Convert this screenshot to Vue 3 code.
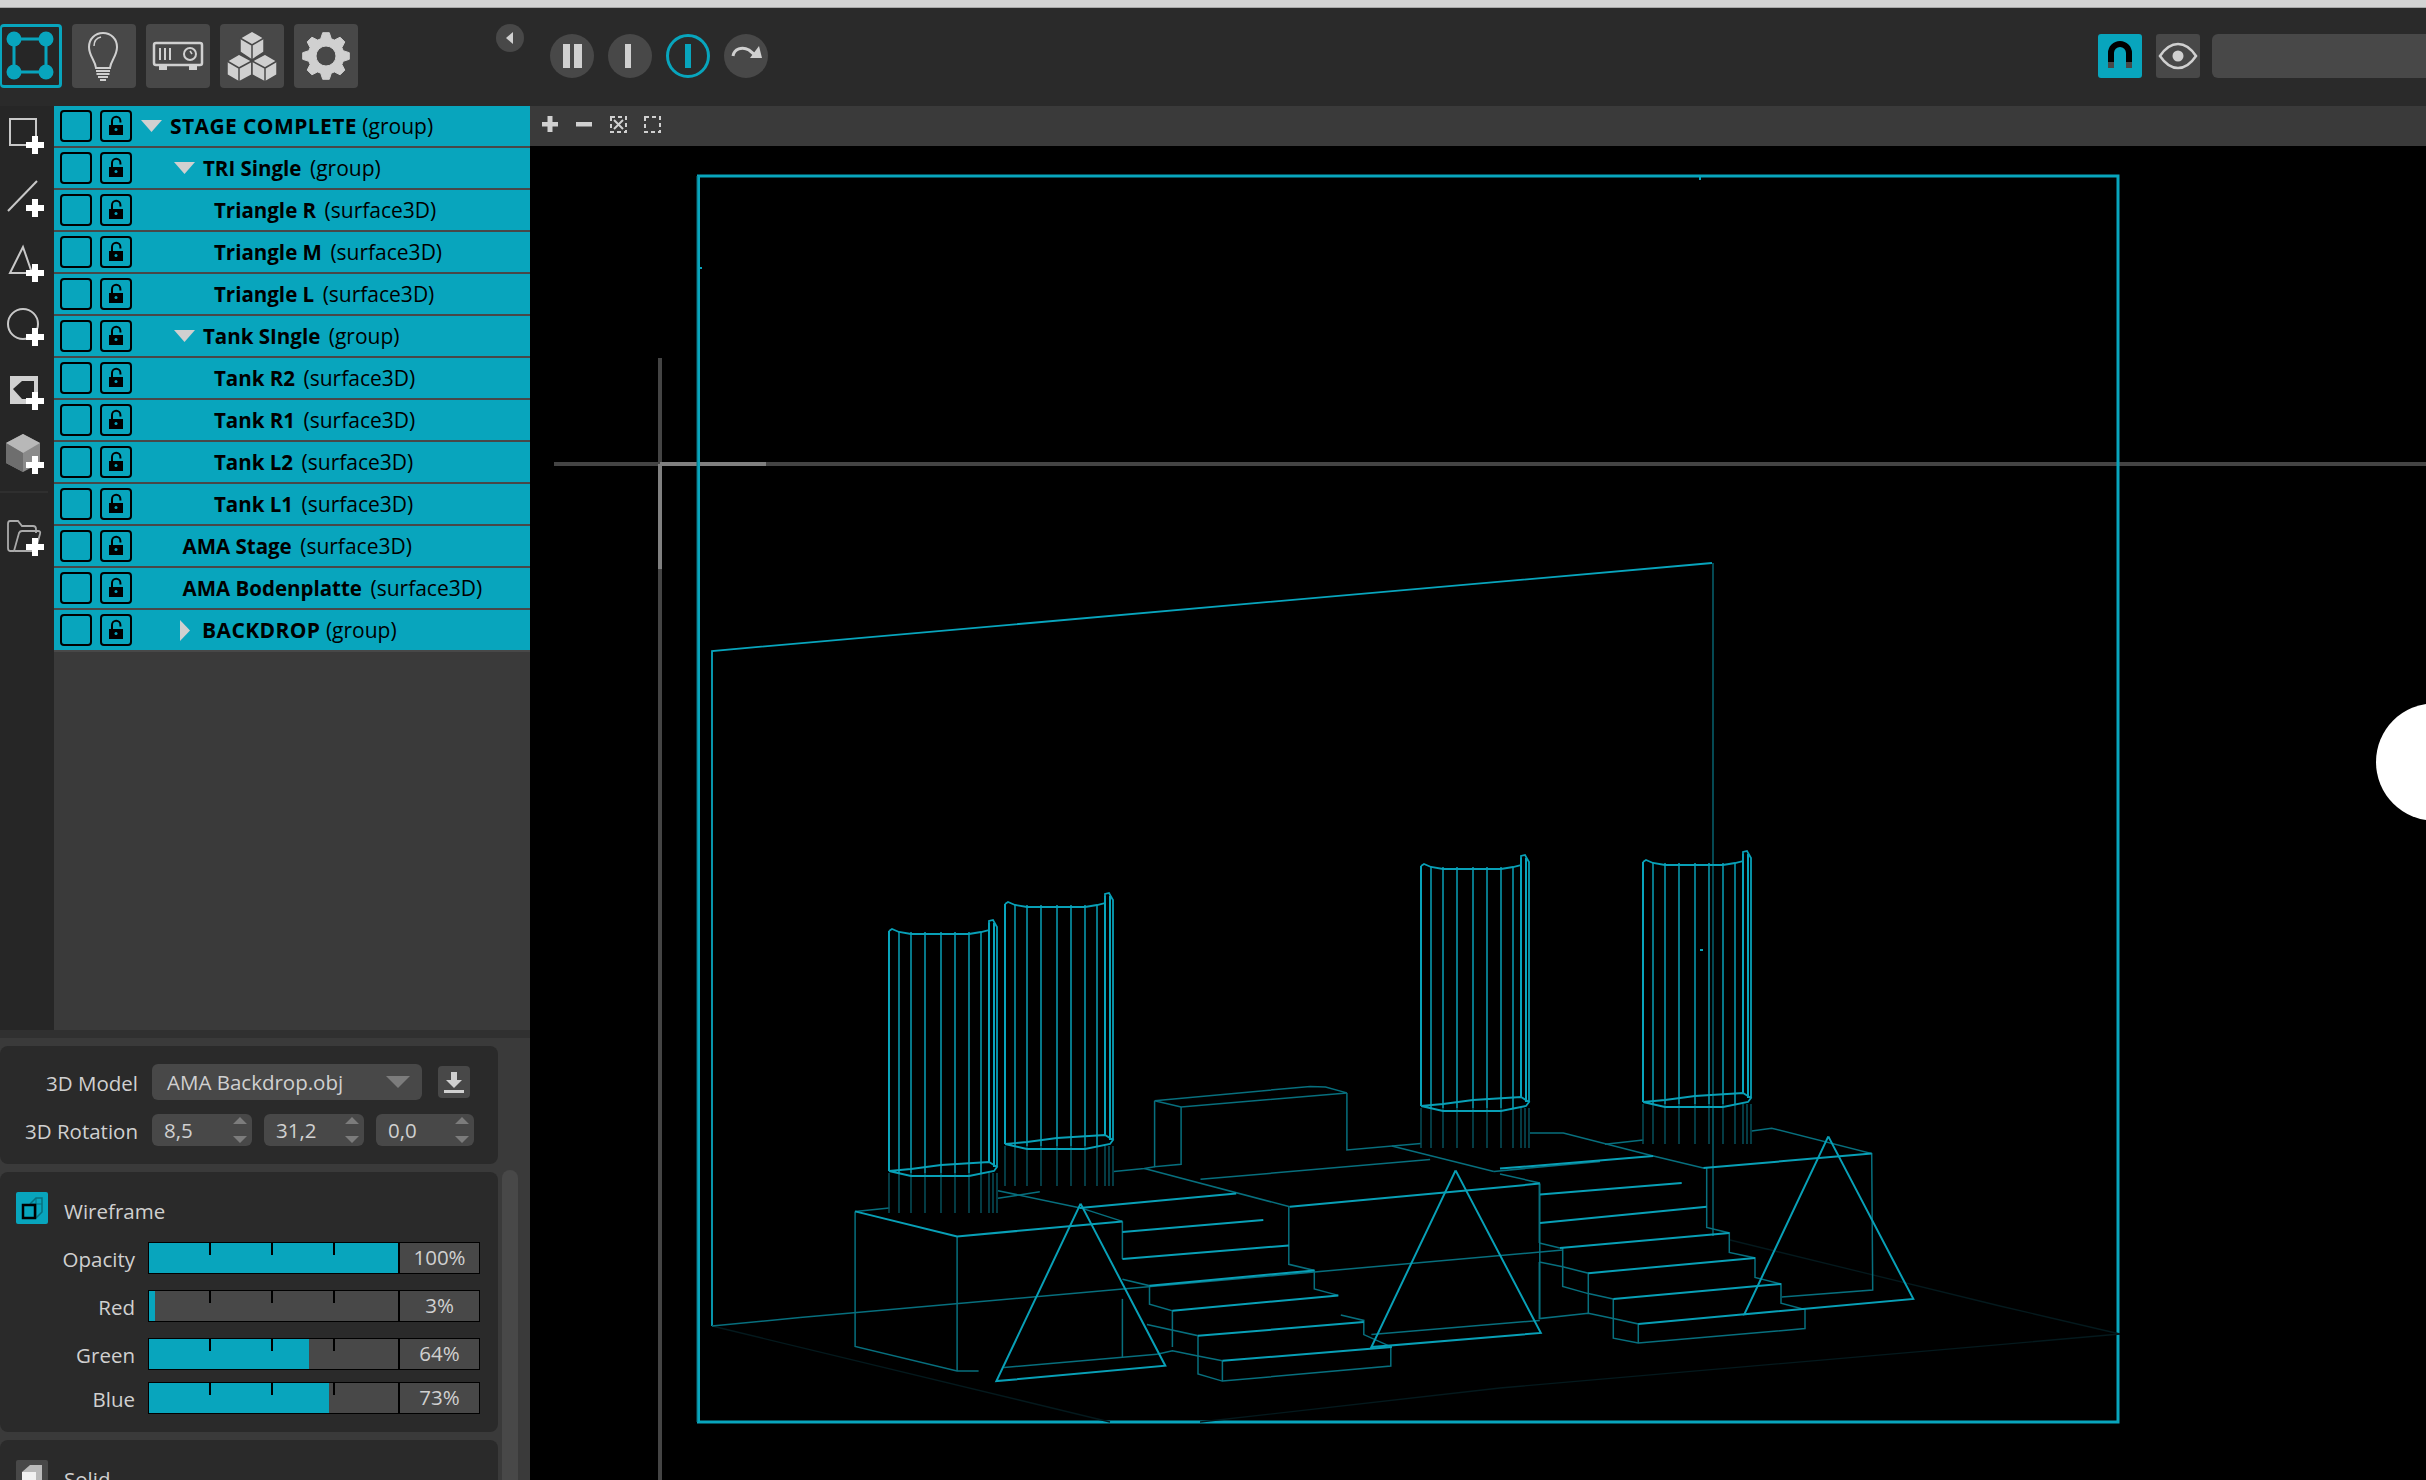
<template>
  <div class="app">
    <div class="titlebar"></div>

    <header class="toolbar">
      <button class="mode active">
        <svg width="56" height="58" viewBox="3 3 56 58">
          <path d="M14 15H46V48H14Z" fill="none" stroke="#08a5bd" stroke-width="3" />
          <circle v-for="c in nodeDots" :key="c[0] + '-' + c[1]" :cx="c[0]" :cy="c[1]" r="7.5" fill="#08a5bd" />
        </svg>
      </button>
      <button class="mode">
        <svg width="64" height="64" viewBox="0 0 64 64" fill="none" stroke="#d0d0d0" stroke-width="2">
          <path d="M24 44C23 36 17 32 17 23 17 15 23 9 31 9 39 9 45 15 45 23 45 32 39 36 38 44Z" />
          <path d="M22 22C22 17 25 14 29 13" stroke-width="1.5" />
          <path d="M24 47H38M24.500 50H37.500M26 53H36M28 56H34" />
        </svg>
      </button>
      <button class="mode">
        <svg width="64" height="64" viewBox="0 0 64 64" fill="none" stroke="#d0d0d0" stroke-width="2.500">
          <rect x="8" y="19" width="48" height="22" rx="2" />
          <path d="M14 24V36M19 24V36M24 24V36" stroke-width="2" />
          <circle cx="44" cy="30" r="6" stroke-width="2" />
          <path d="M44 27L46 30" stroke-width="1.500" />
          <path d="M13 42H21V46H13ZM43 42H51V46H43Z" fill="#d0d0d0" stroke="none" />
        </svg>
      </button>
      <button class="mode">
        <svg width="64" height="64" viewBox="0 0 64 64">
          <g fill="#d0d0d0" stroke="#484848" stroke-width="1.500" stroke-linejoin="round">
            <path d="M32 7L44 14V28L32 36 20 28V14Z" />
            <path d="M20 14L32 21 44 14M32 21V36" fill="none" />
            <path d="M19 30L32 37V51L19 58 7 51V37Z" />
            <path d="M7 37L19 44 32 37M19 44V58" fill="none" />
            <path d="M45 30L57 37V51L45 58 32 51V37Z" />
            <path d="M32 37L45 44 57 37M45 44V58" fill="none" />
          </g>
        </svg>
      </button>
      <button class="mode">
        <svg width="64" height="64" viewBox="0 0 64 64">
          <path :d="gearPath" fill="#d0d0d0" fill-rule="evenodd" stroke="#d0d0d0" stroke-width="1" stroke-linejoin="round" />
        </svg>
      </button>

      <button class="collapse">
        <svg width="8" height="12" viewBox="0 0 8 12"><path d="M7 0V12L0 6Z" fill="#d0d0d0" /></svg>
      </button>

      <div class="transport">
        <button class="round">
          <svg width="44" height="44" viewBox="0 0 44 44" fill="#d0d0d0"><path d="M13 10H20V34H13ZM24 10H32V34H24Z" /></svg>
        </button>
        <button class="round">
          <svg width="44" height="44" viewBox="0 0 44 44" fill="#d0d0d0"><path d="M17 10H23V34H17Z" /></svg>
        </button>
        <button class="round on">
          <svg width="38" height="38" viewBox="3 3 38 38" fill="#08a5bd"><path d="M19 10H25V34H19Z" /></svg>
        </button>
        <button class="round">
          <svg width="44" height="44" viewBox="0 0 44 44" fill="none">
            <path d="M9 22C10 15 18 12 25 16L31 21" stroke="#d0d0d0" stroke-width="3" />
            <path d="M26 24H38L35 12Z" fill="#d0d0d0" />
          </svg>
        </button>
      </div>

      <div class="right-tools">
        <button class="snap on">
          <svg width="44" height="44" viewBox="0 0 44 44" fill="none">
            <path d="M13 28V19A9 9 0 0 1 31 19V28" stroke="#000" stroke-width="6" />
            <path d="M10 28H16V34H10ZM28 28H34V34H28Z" fill="#484848" />
          </svg>
        </button>
        <button class="snap">
          <svg width="44" height="44" viewBox="0 0 44 44">
            <path d="M4 22C10 13 16 10 22 10 28 10 34 13 40 22 34 31 28 34 22 34 16 34 10 31 4 22Z" fill="none" stroke="#d0d0d0" stroke-width="2.500" />
            <circle cx="22" cy="22" r="5.500" fill="#d0d0d0" />
          </svg>
        </button>
        <div class="search"></div>
      </div>
    </header>

    <div class="main">
      <aside class="side">
        <div class="upper">
          <nav class="tools">
            <svg width="54" height="460" viewBox="0 0 54 460" fill="none" stroke="#c8c8c8" stroke-width="2">
              <rect x="10" y="13" width="26" height="26" />
              <path d="M8 105L37 75" />
              <path d="M23 141L10 167H32Z" />
              <circle cx="23" cy="218" r="15" />
              <path d="M10 270H38V298H10ZM13 283L22 275H34V293H22Z" fill="#d0d0d0" fill-rule="evenodd" stroke="none" />
              <path d="M23 328L40 337 40 357 23 366 6 357V337Z" fill="#8a8a8a" stroke="none" />
              <path d="M23 328L40 337 23 347 6 337Z" fill="#b8b8b8" stroke="none" />
              <path d="M23 347V366L6 357V337Z" fill="#6e6e6e" stroke="none" />
              <path d="M0 386H48" stroke="#383838" stroke-width="1" />
              <g stroke="#aaa" stroke-width="1.800">
                <path d="M14 445H10Q8 445 8 442V418Q8 415 10 415H18L22 420H33Q36 420 36 423V427" />
                <path d="M14 445L19 427Q20 425 22 425H38Q41 425 40 428L36 442Q35 445 32 445H14" />
              </g>
              <g fill="#fff" stroke="none">
                <path v-for="p in plusMarks" :key="p" :d="`M${35 - 3} ${p - 9}h6v6h6v6h-6v6h-6v-6h-6v-6h6Z`" />
              </g>
            </svg>
          </nav>

          <section class="tree">
            <div v-for="row in rows" :key="row.name" class="row">
              <span class="check"></span>
              <span class="check">
                <svg width="28" height="28" viewBox="2 2 28 28">
                  <path d="M12 15V11A4.200 4.200 0 0 1 20.400 11V12.500" fill="none" stroke="#000" stroke-width="2" />
                  <rect x="9" y="15" width="14" height="10" fill="#000" />
                  <circle cx="16" cy="19.500" r="1.500" fill="#08a5bd" />
                </svg>
              </span>
              <span class="row-label" :class="'lv' + row.level">
                <svg v-if="row.arrow === 'down'" class="arrow" width="21" height="12" viewBox="0 0 21 12"><path d="M0 0H21L10.500 12Z" fill="#d0d0d0" /></svg>
                <svg v-if="row.arrow === 'right'" class="arrow" width="10" height="21" viewBox="0 0 10 21"><path d="M0 0L10 10.500 0 21Z" fill="#d0d0d0" /></svg>
                <b :class="{ caps: row.name === row.name.toUpperCase() }">{{ row.name }}</b>&nbsp;<span>({{ row.kind }})</span>
              </span>
            </div>
          </section>
        </div>

        <div class="band"></div>

        <div class="props">
          <div class="cards">
            <div class="card model">
              <div class="form-row">
                <label>3D Model</label>
                <div class="select">
                  <span>AMA Backdrop.obj</span>
                  <svg width="24" height="12" viewBox="0 0 24 12"><path d="M0 0H24L12 12Z" fill="#7c7c7c" /></svg>
                </div>
                <button class="dl">
                  <svg width="24" height="24" viewBox="0 0 24 24" fill="#d0d0d0"><path d="M9 2H15V10H20L12 18 4 10H9ZM2 20H22V23H2Z" /></svg>
                </button>
              </div>
              <div class="form-row">
                <label>3D Rotation</label>
                <div v-for="(r, i) in rotation" :key="i" class="spin" :class="{ narrow: i === 2 }">
                  <span>{{ r }}</span>
                  <svg width="14" height="26" viewBox="0 0 14 26" fill="#7c7c7c"><path d="M7 0L14 7H0ZM0 19H14L7 26Z" /></svg>
                </div>
              </div>
            </div>

            <div class="card">
              <div class="card-head">
                <span class="mode-icon wire">
                  <svg width="32" height="32" viewBox="0 0 32 32" fill="none">
                    <path d="M14 12L20 6H26V20L20 26" stroke="#07707f" stroke-width="1.500" />
                    <path d="M14 12H26M20 6V26" stroke="#07707f" stroke-width="1" />
                    <rect x="7" y="13" width="12" height="13" stroke="#000" stroke-width="2.500" />
                  </svg>
                </span>
                <span class="head-text">Wireframe</span>
              </div>
              <div v-for="s in sliders" :key="s.name" class="slider-row">
                <label>{{ s.name }}</label>
                <div class="slider">
                  <div class="track">
                    <div class="fill" :style="{ width: s.fill + 'px' }"></div>
                    <i class="tick"></i><i class="tick"></i><i class="tick"></i>
                  </div>
                  <div class="value">{{ s.value }}</div>
                </div>
              </div>
            </div>

            <div class="card">
              <div class="card-head">
                <span class="mode-icon">
                  <svg width="32" height="32" viewBox="0 0 32 32">
                    <path d="M6 12L14 5H26V24L20 32H6Z" fill="#bbb" />
                    <path d="M6 12H20V32H6Z" fill="#f2f2f2" />
                  </svg>
                </span>
                <span class="head-text">Solid</span>
              </div>
            </div>
          </div>
          <div class="scrollbar"></div>
        </div>
      </aside>

      <section class="viewer">
        <div class="viewer-head">
          <svg width="140" height="40" viewBox="530 106 140 40">
            <path d="M547.500 116H552.500V122H558V126.500H552.500V132H547.500V126.500H542V122H547.500ZM576 122H592V126.500H576Z" fill="#d0d0d0" />
            <path d="M611 117H626V132H611Z" fill="none" stroke="#d0d0d0" stroke-width="2" stroke-dasharray="4 3" />
            <path d="M614 120L623 129M623 120L614 129" stroke="#d0d0d0" stroke-width="2" />
            <rect x="645" y="117" width="15" height="15" fill="none" stroke="#d0d0d0" stroke-width="2" stroke-dasharray="4 3" />
          </svg>
        </div>
        <svg class="scene" width="1896" height="1334" viewBox="530 146 1896 1334" fill="none">
          <g stroke-width="4">
            <path d="M660 358V1480M554 464H2426" stroke="#444" />
            <path d="M660 464V569M660 464H766" stroke="#808080" />
          </g>
          <circle cx="2434.600" cy="762" r="58.600" fill="#fff" />

          <rect x="698.500" y="176" width="1419.500" height="1246" stroke="#08a5bd" stroke-width="3" />
          <path d="M697 176V1422" stroke="#07707f" stroke-width="1" />
          <path d="M1700 177v3M699 268h3M1700 950h3" stroke="#08a5bd" stroke-width="2" />

          <polyline points="712,1326 712,651 1712,563" stroke="#08a5bd" stroke-width="1.800" />
          <path d="M1713 563V1236" stroke="#07707f" stroke-width="1.300" />

          <g stroke="#04191d" stroke-width="1.300">
            <polyline v-for="p in faintLines" :key="p" :points="p" />
          </g>
          <g stroke="#076f7e" stroke-width="1.500">
            <polyline v-for="p in midLines" :key="p" :points="p" />
          </g>
          <g stroke="#08a0b7" stroke-width="2">
            <polyline v-for="p in brightLines" :key="p" :points="p" />
          </g>

          <g v-for="(col, i) in columns" :key="i">
            <path :d="col.lower" stroke="#075561" stroke-width="1.400" />
            <path :d="col.ribs" stroke="#08a0b7" stroke-width="1.500" />
            <path :d="col.outer" stroke="#08a5bd" stroke-width="2" />
            <path :d="col.rims" stroke="#08a0b7" stroke-width="1.800" />
          </g>
        </svg>
      </section>
    </div>
  </div>
</template>

<script setup>
const nodeDots = [[14, 15], [46, 15], [14, 48], [46, 48]]
const plusMarks = [39, 102, 167, 231, 295, 359, 441]
const rotation = ['8,5', '31,2', '0,0']

const rows = [
  { name: 'STAGE COMPLETE', kind: 'group', level: 0, arrow: 'down' },
  { name: 'TRI Single', kind: 'group', level: 1, arrow: 'down' },
  { name: 'Triangle R', kind: 'surface3D', level: 2 },
  { name: 'Triangle M', kind: 'surface3D', level: 2 },
  { name: 'Triangle L', kind: 'surface3D', level: 2 },
  { name: 'Tank SIngle', kind: 'group', level: 1, arrow: 'down' },
  { name: 'Tank R2', kind: 'surface3D', level: 2 },
  { name: 'Tank R1', kind: 'surface3D', level: 2 },
  { name: 'Tank L2', kind: 'surface3D', level: 2 },
  { name: 'Tank L1', kind: 'surface3D', level: 2 },
  { name: 'AMA Stage', kind: 'surface3D', level: 3 },
  { name: 'AMA Bodenplatte', kind: 'surface3D', level: 3 },
  { name: 'BACKDROP', kind: 'group', level: 4, arrow: 'right' },
]

const sliders = [
  { name: 'Opacity', value: '100%', fill: 249 },
  { name: 'Red', value: '3%', fill: 5.5 },
  { name: 'Green', value: '64%', fill: 159.5 },
  { name: 'Blue', value: '73%', fill: 179.5 },
]

// gear with 8 teeth, drawn around 32,32
const gearPath = (() => {
  const pts = []
  for (let i = 0; i < 8; i++) {
    const a = (i * Math.PI) / 4 - Math.PI / 2
    for (const [r, d] of [[18, -0.3], [23.5, -0.14], [23.5, 0.14], [18, 0.3]]) {
      pts.push(`${(32 + r * Math.cos(a + d)).toFixed(1)} ${(32 + r * Math.sin(a + d)).toFixed(1)}`)
    }
  }
  return `M${pts.join('L')}Z M42 32A10 10 0 1 0 22 32A10 10 0 1 0 42 32Z`
})()

// the scene was measured from two crops with their own scale
const fromA = (s) => s.split(' ').map((p) => {
  const [x, y] = p.split(',').map(Number)
  return `${(800 + x / 1.96).toFixed(1)},${(840 + y / 2.8).toFixed(1)}`
}).join(' ')
const fromB = (s) => s.split(' ').map((p) => {
  const [x, y] = p.split(',').map(Number)
  return `${(1500 + x / 3).toFixed(1)},${(840 + y / 2.8).toFixed(1)}`
}).join(' ')

const brightLines = [
  ...[
    '550,1018 716,1472 385,1515 550,1018',
    '1285,925 1452,1380 1120,1420 1285,925',
    '548,1030 855,990',
    '108,1040 308,1110 632,1068',
    '632,1098 908,1064',
    '632,1173 958,1135',
    '685,1248 1008,1205',
    '730,1318 1055,1275',
    '780,1388 1105,1350',
    '828,1458 1160,1420',
    '960,1027 1450,962',
  ].map(fromA),
  ...[
    '985,830 1240,1285 733,1328 985,830',
    '0,920 460,885',
    '610,918 1115,878',
    '120,993 545,960',
    '120,1072 620,1027',
    '180,1142 688,1100',
    '265,1213 765,1170',
    '340,1285 843,1243',
    '415,1355 733,1328',
  ].map(fromB),
]

const midLines = [
  '712,1326 800,1317.500',
  ...[
    '108,1040 175,1030',
    '108,1040 108,1418 308,1487 350,1487',
    '308,1110 308,1487',
    '632,1068 632,1173',
    '388,982 550,1030 632,1068',
    '632,1285 632,1448',
    '0,1337 1495,1148',
    '400,1477 700,1440',
    '700,1440 730,1430 780,1445 828,1458',
    '632,1230 685,1248 685,1300 730,1318 730,1420',
    '680,1357 780,1388 780,1495 828,1515 1158,1473 1158,1420',
    '828,1458 828,1515',
    '958,1027 958,1188 1008,1205 1008,1257 1055,1275',
    '1060,1330 1105,1345 1105,1385 1160,1420',
    '1120,1385 1450,1345',
    '695,730 747,748 1072,708 1030,692 1000,690 695,730',
    '695,730 695,915 747,908 747,748',
    '1072,708 1072,868 1217,850',
    '1160,857 1360,928',
    '785,950 1235,895',
    '615,928 675,920 695,915',
    '675,920 960,1027',
    '388,1003 470,985',
    '1450,962 1450,1340',
    '1360,928 1568,900',
  ].map(fromA),
  ...[
    '755,815 815,807 1115,878 1118,1260 845,1280',
    '460,885 610,918',
    '620,918 620,1085 688,1100 688,1155 765,1170 765,1225 843,1243 843,1297 915,1315 915,1368 415,1408 340,1395 340,1285',
    '340,1340 415,1355 415,1408',
    '118,1128 180,1142',
    '188,1142 188,1250 265,1270 340,1285',
    '188,1195 265,1213 265,1325',
    '118,1182 188,1195',
    '118,1182 118,1340 265,1325 340,1340',
    '90,820 190,820 460,885',
    '315,852 430,840',
    '0,935 118,960 118,1128',
  ].map(fromB),
]

const faintLines = [
  '712,1326 1019,1400 1110,1422',
  '1200,1422 1500,1388 2000,1344.600 2120,1334',
  '1730,1240 2000,1306 2120,1334',
]

// the four tanks share one shape, only their origin moves
const ribX = [0, 10, 22, 36, 52, 66, 80, 92, 100, 104, 108]
const columns = [[889, 931], [1005, 904], [1421, 866], [1643, 862]].map(([x, y]) => ({
  lower: ribX.map((r) => `M${x + r} ${y + 242}V${y + 282}`).join(''),
  ribs: ribX.slice(1, 8).map((r) => `M${x + r} ${y + 1}V${y + 242}`).join(''),
  outer: `M${x} ${y}V${y + 240}M${x + 100} ${y - 8}V${y + 232}M${x + 105} ${y - 8}V${y + 236}`,
  rims: `M${x} ${y}L${x + 3} ${y - 2}L${x + 10} ${y + 1}L${x + 22} ${y + 3}H${x + 80}L${x + 92} ${y + 1}L${x + 100} ${y - 1}V${y - 10}L${x + 104} ${y - 11}L${x + 108} ${y - 4}V${y + 236}`
    + `M${x} ${y + 240}L${x + 22} ${y + 245}H${x + 80}L${x + 105} ${y + 240}L${x + 108} ${y + 236}L${x + 100} ${y + 231}L${x + 52} ${y + 234}L${x + 22} ${y + 238}L${x} ${y + 240}`,
}))
</script>

<style>
html, body {
  margin: 0;
  background: #000;
}
</style>

<style scoped>
.app {
  width: 2426px;
  height: 1480px;
  overflow: hidden;
  display: flex;
  flex-direction: column;
  font-family: "Open Sans", "Liberation Sans", sans-serif;
  color: #d0d0d0;
  font-size: 20.500px;
}

button {
  border: 0;
  padding: 0;
  display: flex;
  align-items: center;
  justify-content: center;
}

.titlebar {
  height: 7px;
  background: #d3d3d3;
  border-bottom: 1px solid #a8a8a8;
}

.toolbar {
  height: 98px;
  box-sizing: border-box;
  padding-top: 16px;
  background: #2a2a2a;
  display: flex;
  align-items: flex-start;
  gap: 10px;
}

.mode {
  width: 64px;
  height: 64px;
  background: #484848;
  border-radius: 4px;
}

.mode.active {
  width: 62px;
  background: #262626;
  box-sizing: border-box;
  border: 3px solid #08a5bd;
  border-left-width: 2px;
}

.collapse {
  width: 28px;
  height: 28px;
  margin-left: 128px;
  background: #484848;
  border-radius: 14px;
}

.transport {
  display: flex;
  gap: 14px;
  margin-left: 16px;
  margin-top: 10px;
}

.round {
  width: 44px;
  height: 44px;
  border-radius: 22px;
  background: #484848;
}

.round.on {
  background: transparent;
  box-sizing: border-box;
  border: 3px solid #08a5bd;
}

.right-tools {
  margin-left: auto;
  margin-top: 10px;
  display: flex;
  gap: 14px;
}

.snap {
  width: 44px;
  height: 44px;
  background: #484848;
  border-radius: 3px;
}

.snap.on {
  background: #08a5bd;
}

.search {
  width: 214px;
  height: 44px;
  margin-left: -2px;
  background: #484848;
  border-radius: 6px 0 0 6px;
}

.main {
  flex: 1;
  display: flex;
  min-height: 0;
}

.side {
  width: 530px;
  display: flex;
  flex-direction: column;
  background: #3a3a3a;
}

.upper {
  height: 924px;
  display: flex;
}

.tools {
  width: 54px;
  background: #262626;
}

.tools svg {
  display: block;
}

.tree {
  flex: 1;
  background: #3a3a3a;
}

.row {
  height: 42px;
  box-sizing: border-box;
  padding-left: 6px;
  background: #08a5bd;
  border-bottom: 2px solid #484848;
  display: flex;
  align-items: center;
  gap: 8px;
  color: #000;
}

.check {
  width: 32px;
  height: 32px;
  box-sizing: border-box;
  border: 2px solid #000;
  border-radius: 4px;
  flex: none;
  display: flex;
}

.row-label {
  display: flex;
  align-items: center;
  white-space: pre;
  font-size: 21px;
  line-height: 24px;
}

.row-label b {
  font-weight: 700;
  font-size: 20.500px;
  margin-right: 3px;
}

.row-label b.caps {
  font-size: 21px;
  letter-spacing: 0.4px;
  margin-right: 0;
}

.arrow {
  margin-right: 8px;
}

.lv0 { margin-left: 1px; }
.lv1 { margin-left: 34px; }
.lv2 { margin-left: 74px; }
.lv3 { margin-left: 42.500px; }
.lv4 { margin-left: 40px; }

.lv4 .arrow {
  margin-right: 12px;
}

.band {
  height: 8px;
  background: #303030;
}

.props {
  flex: 1;
  min-height: 0;
  padding-top: 8px;
  display: flex;
  overflow: hidden;
}

.cards {
  width: 498px;
  flex: none;
  display: flex;
  flex-direction: column;
  gap: 8px;
}

.card {
  background: #2a2a2a;
  border-radius: 8px;
  padding: 20px 0 18px;
}

.model {
  padding-top: 18px;
}

.scrollbar {
  width: 16px;
  margin: 124px 0 0 4px;
  background: #484848;
  border-radius: 8px 8px 0 0;
}

.form-row {
  display: flex;
  align-items: center;
  gap: 12px;
  margin-bottom: 14px;
}

.form-row:last-child {
  margin-bottom: 0;
}

.form-row label {
  width: 138px;
  margin-right: 2px;
  padding-top: 2px;
  text-align: right;
  white-space: nowrap;
}

.select {
  width: 270px;
  height: 36px;
  box-sizing: border-box;
  padding: 0 12px 0 15px;
  background: #484848;
  border-radius: 6px;
  display: flex;
  align-items: center;
  justify-content: space-between;
}

.dl {
  width: 32px;
  height: 32px;
  margin-left: 4px;
  background: #484848;
  border-radius: 4px;
}

.spin {
  width: 100px;
  height: 32px;
  box-sizing: border-box;
  padding: 0 5px 0 12px;
  background: #484848;
  border-radius: 6px;
  display: flex;
  align-items: center;
  justify-content: space-between;
}

.spin.narrow {
  width: 98px;
}

.card-head {
  height: 32px;
  display: flex;
  align-items: center;
  gap: 16px;
  padding-left: 16px;
  margin-bottom: 18px;
}

.head-text {
  line-height: 24px;
  padding-top: 5px;
}

.mode-icon {
  width: 32px;
  height: 32px;
  background: #484848;
  border-radius: 2px;
  display: flex;
}

.mode-icon.wire {
  background: #08a5bd;
}

.slider-row {
  height: 32px;
  display: flex;
  align-items: center;
  margin-bottom: 16px;
}

.slider-row:nth-of-type(4) {
  margin-bottom: 12px;
}

.slider-row:last-child {
  margin-bottom: 0;
}

.slider-row label {
  width: 135px;
  margin-right: 13px;
  line-height: 24px;
  padding-top: 1px;
  text-align: right;
}

.slider {
  width: 332px;
  height: 32px;
  box-sizing: border-box;
  border: 1.500px solid #000;
  display: flex;
  background: #484848;
}

.track {
  width: 251px;
  flex: none;
  border-right: 2px solid #000;
  display: flex;
  justify-content: space-between;
  position: relative;
  padding: 0 63px 0 60px;
  box-sizing: border-box;
}

.fill {
  position: absolute;
  left: 0;
  top: 0;
  bottom: 0;
  background: #08a5bd;
}

.tick {
  width: 2px;
  height: 12px;
  background: #000;
  position: relative;
}

.value {
  flex: 1;
  text-align: center;
  line-height: 29px;
}

.viewer {
  flex: 1;
  min-width: 0;
  background: #000;
}

.viewer-head {
  height: 40px;
  background: #3a3a3a;
}

.viewer-head svg,
.scene {
  display: block;
}
</style>
